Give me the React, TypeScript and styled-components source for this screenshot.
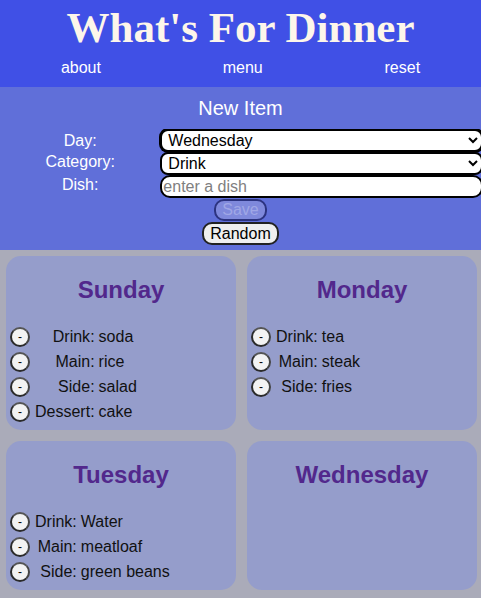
import styled, { createGlobalStyle } from "styled-components";

const GlobalStyle = createGlobalStyle`
  html, body {
    margin: 0;
    padding: 0;
    background: #aaabb9;
    font-family: "Liberation Sans", Arial, sans-serif;
  }
  * {
    box-sizing: border-box;
  }
`;

const Header = styled.header`
  background: #4050e6;
  padding: 4px 0 9px;
  color: #fff;
`;

const Title = styled.h1`
  margin: 0;
  font-family: "Liberation Serif", "Times New Roman", serif;
  font-weight: bold;
  font-size: 43px;
  line-height: 48px;
  text-align: center;
  color: #fdf6ea;
`;

const Nav = styled.nav`
  display: flex;
  justify-content: space-around;
  margin-top: 6px;
  font-size: 16px;
  line-height: 20px;
`;

const NavLink = styled.a`
  color: #fff;
  text-decoration: none;
  cursor: pointer;
`;

const FormPanel = styled.section`
  background: #606fd9;
  padding: 9px 0 5px;
`;

const PanelTitle = styled.h2`
  margin: 0 0 9px;
  font-size: 20px;
  line-height: 24px;
  font-weight: normal;
  text-align: center;
  color: #fff;
`;

const FormGrid = styled.div`
  display: grid;
  grid-template-columns: 1fr 2fr;
  grid-auto-rows: 23px;
  align-items: center;
  overflow: hidden;
`;

const Label = styled.label<{ $lift?: number }>`
  text-align: center;
  color: #fff;
  font-size: 16px;
  line-height: 18px;
  margin-top: ${(p) => -(p.$lift ?? 0)}px;
`;

const Select = styled.select<{ $focused?: boolean }>`
  width: calc(100% + 2px);
  height: 23px;
  font-family: "Liberation Sans", Arial, sans-serif;
  font-size: 16px;
  color: #000;
  background: #fff;
  border: 2px solid #000;
  border-radius: 8px;
  padding: 0 2px;
  outline: none;
  box-shadow: ${(p) => (p.$focused ? "0 0 0 1px #000" : "none")};
`;

const TextInput = styled.input`
  width: calc(100% + 2px);
  height: 23px;
  font-family: "Liberation Sans", Arial, sans-serif;
  font-size: 16px;
  border: 2px solid #000;
  border-radius: 10px;
  padding: 0 1px;
  background: #fff;
  outline: none;
  &::placeholder {
    color: #808080;
  }
`;

const Actions = styled.div`
  display: flex;
  flex-direction: column;
  align-items: center;
  gap: 1px;
  margin-top: 1px;
`;

const ActionButton = styled.button`
  font-family: "Liberation Sans", Arial, sans-serif;
  font-size: 16px;
  line-height: 18px;
  height: 23px;
  padding: 0 6px;
  border: 2px solid #222;
  border-radius: 10px;
  background: #efefef;
  color: #000;

  &:disabled {
    height: 22px;
    background: #7f89dc;
    color: #a0a7e6;
    border-color: #2c3380;
  }
`;

const Board = styled.main`
  display: grid;
  grid-template-columns: 1fr 1fr;
  gap: 11px;
  padding: 6px 4px 8px 6px;
`;

const Card = styled.article`
  background: #959dcb;
  border-radius: 15px;
  padding: 20px 4px 6px;
`;

const DayName = styled.h3`
  margin: 0 0 20px;
  font-size: 24px;
  line-height: 28px;
  font-weight: bold;
  text-align: center;
  color: #52288c;
`;

const Items = styled.div`
  display: grid;
  grid-template-columns: max-content max-content 1fr;
  grid-auto-rows: 25px;
  align-items: center;
  font-size: 16px;
  color: #111;
`;

const RemoveButton = styled.button`
  width: 20px;
  height: 20px;
  padding: 0;
  margin-right: 5px;
  border-radius: 50%;
  border: 2px solid #2a2a2a;
  border-top-color: #555;
  border-right-color: #444;
  background: #f3f3f3;
  font-family: "Liberation Sans", Arial, sans-serif;
  font-size: 12px;
  line-height: 14px;
  color: #000;
`;

const Category = styled.span`
  justify-self: end;
`;

const Dish = styled.span`
  padding-left: 4px;
  white-space: nowrap;
`;

type Meal = { category: string; dish: string };

const week: { day: string; meals: Meal[] }[] = [
  {
    day: "Sunday",
    meals: [
      { category: "Drink", dish: "soda" },
      { category: "Main", dish: "rice" },
      { category: "Side", dish: "salad" },
      { category: "Dessert", dish: "cake" },
    ],
  },
  {
    day: "Monday",
    meals: [
      { category: "Drink", dish: "tea" },
      { category: "Main", dish: "steak" },
      { category: "Side", dish: "fries" },
    ],
  },
  {
    day: "Tuesday",
    meals: [
      { category: "Drink", dish: "Water" },
      { category: "Main", dish: "meatloaf" },
      { category: "Side", dish: "green beans" },
    ],
  },
  { day: "Wednesday", meals: [] },
];

const days = ["Sunday", "Monday", "Tuesday", "Wednesday", "Thursday", "Friday", "Saturday"];
const categories = ["Drink", "Main", "Side", "Dessert"];

const Row = ({ meal }: { meal: Meal }) => (
  <>
    <RemoveButton>-</RemoveButton>
    <Category>{meal.category}:</Category>
    <Dish>{meal.dish}</Dish>
  </>
);

const App = () => {
  return (
    <>
      <GlobalStyle />
      <Header>
        <Title>What's For Dinner</Title>
        <Nav>
          <NavLink>about</NavLink>
          <NavLink>menu</NavLink>
          <NavLink>reset</NavLink>
        </Nav>
      </Header>

      <FormPanel>
        <PanelTitle>New Item</PanelTitle>
        <FormGrid>
          <Label $lift={0}>Day:</Label>
          <Select $focused defaultValue="Wednesday">
            {days.map((d) => (
              <option key={d}>{d}</option>
            ))}
          </Select>
          <Label $lift={4}>Category:</Label>
          <Select defaultValue="Drink">
            {categories.map((c) => (
              <option key={c}>{c}</option>
            ))}
          </Select>
          <Label $lift={4}>Dish:</Label>
          <TextInput placeholder="enter a dish" />
        </FormGrid>
        <Actions>
          <ActionButton disabled>Save</ActionButton>
          <ActionButton>Random</ActionButton>
        </Actions>
      </FormPanel>

      <Board>
        {week.map(({ day, meals }) => (
          <Card key={day}>
            <DayName>{day}</DayName>
            <Items>
              {meals.map((m) => (
                <Row key={m.category} meal={m} />
              ))}
            </Items>
          </Card>
        ))}
      </Board>
    </>
  );
};

export default App;
